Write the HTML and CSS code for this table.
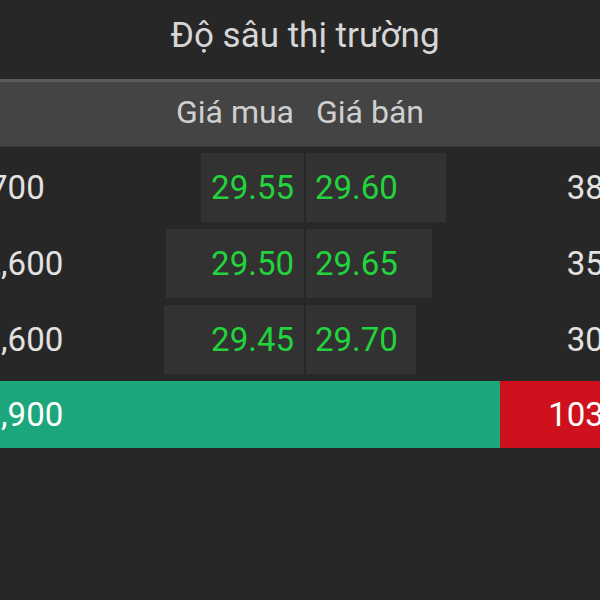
FILE: index.html
```html
<!DOCTYPE html>
<html lang="vi">
<head>
    <meta charset="UTF-8">
    <meta name="viewport" content="width=device-width, initial-scale=1.0">
    <title>Độ sâu thị trường</title>
    <link rel="stylesheet" href="styles.css">
</head>
<body>
    <div class="depth">
        <div class="title">Độ sâu thị trường</div>

        <div class="head">
            <div></div>
            <div class="head-bid">Giá mua</div>
            <div class="head-ask">Giá bán</div>
            <div></div>
        </div>

        <div class="rows">
            <div class="row">
                <div class="vol vol-bid">3,700</div>
                <div class="cell cell-bid"><div class="bar" style="width: 103px">29.55</div></div>
                <div class="cell cell-ask"><div class="bar" style="width: 140px">29.60</div></div>
                <div class="vol vol-ask">38,200</div>
            </div>
            <div class="row">
                <div class="vol vol-bid">12,600</div>
                <div class="cell cell-bid"><div class="bar" style="width: 138px">29.50</div></div>
                <div class="cell cell-ask"><div class="bar" style="width: 126px">29.65</div></div>
                <div class="vol vol-ask">35,100</div>
            </div>
            <div class="row">
                <div class="vol vol-bid">21,600</div>
                <div class="cell cell-bid"><div class="bar" style="width: 140px">29.45</div></div>
                <div class="cell cell-ask"><div class="bar" style="width: 110px">29.70</div></div>
                <div class="vol vol-ask">30,000</div>
            </div>

            <div class="total">
                <div class="total-bid" style="width: 556px">37,900</div>
                <div class="total-ask">103,300</div>
            </div>
        </div>
    </div>
</body>
</html>
```

FILE: styles.css
```css
body {
    margin: 0;
    background-color: #272727;
    font-family: Roboto, "Liberation Sans", sans-serif;
    overflow: hidden;
}
.depth {
    width: 722px;
    margin-left: -56px;
}
.title {
    padding: 18px 0 25px;
    line-height: 36px;
    font-size: 35px;
    color: #d6d6d6;
    text-align: center;
}
.head,
.row {
    display: grid;
    grid-template-columns: 119px 239px 239px 119px;
    column-gap: 2px;
}
.head {
    background-color: #444444;
    border-top: 3px solid #5a5a5a;
    border-bottom: 1px solid #3a3a3a;
    height: 61px;
    padding-bottom: 3px;
    line-height: 61px;
    font-size: 32px;
    color: #cfcfcf;
}
.head-bid {
    text-align: right;
    padding-right: 10px;
}
.head-ask {
    padding-left: 10px;
}
.rows {
    display: flex;
    flex-direction: column;
    gap: 7px;
    padding-top: 6px;
}
.row {
    height: 69px;
    font-size: 33px;
}
.vol {
    line-height: 69px;
    color: #e2e2e2;
    white-space: nowrap;
}
.vol-bid {
    padding-left: 20px;
}
.vol-ask {
    text-align: right;
}
.cell {
    display: flex;
}
.cell-bid {
    justify-content: flex-end;
}
.bar {
    background-color: #323232;
    line-height: 69px;
    color: #22d33c;
    box-sizing: border-box;
}
.cell-bid .bar {
    text-align: right;
    padding-right: 10px;
}
.cell-ask .bar {
    padding-left: 9px;
}
.total {
    display: flex;
    height: 67px;
    line-height: 67px;
    font-size: 33px;
    color: #ffffff;
}
.total-bid {
    background-color: #1ba77b;
    padding-left: 20px;
    box-sizing: border-box;
}
.total-ask {
    flex: 1;
    background-color: #cf111d;
    text-align: right;
}
```
